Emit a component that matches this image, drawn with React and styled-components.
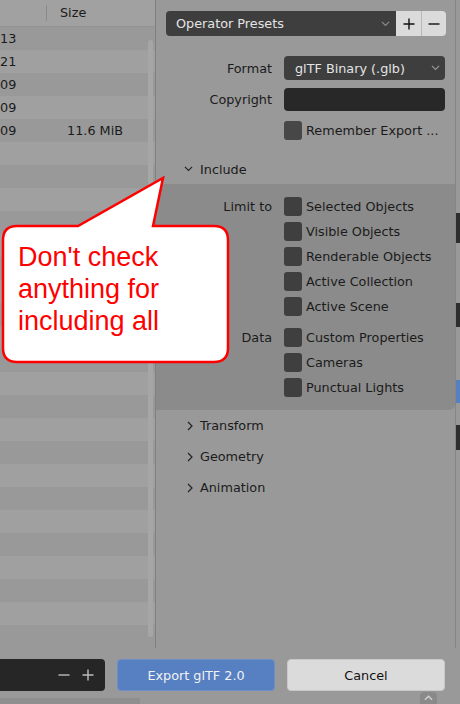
import styled, { createGlobalStyle } from "styled-components";

const GlobalStyle = createGlobalStyle`
  html, body {
    margin: 0;
    padding: 0;
    background: #999999;
  }
  body {
    font-family: "DejaVu Sans", "Liberation Sans", sans-serif;
  }
`;

const Window = styled.div`
  position: relative;
  width: 460px;
  height: 704px;
  overflow: hidden;
  background: #999999;
  display: flex;
  flex-direction: column;
  font-size: 12.8px;
  color: #1b1b1b;
`;

const Main = styled.div`
  display: flex;
  height: 648px;
`;

/* ---------- file list ---------- */
const FileList = styled.div`
  position: relative;
  width: 155px;
  display: flex;
  flex-direction: column;
  border-right: 1px solid #808080;
  background: #9a9a9a;
`;

const ListHeader = styled.div`
  display: flex;
  align-items: center;
  height: 26px;
  background: #a1a1a1;
  border-bottom: 1px solid #929292;
`;

const HeaderCell = styled.div`
  width: ${({ $w }) => $w}px;
  height: 16px;
  padding-left: ${({ $pad }) => $pad || 0}px;
  line-height: 16px;
  border-right: ${({ $sep }) => ($sep ? "1px solid #8a8a8a" : "none")};
  box-sizing: border-box;
`;

const Row = styled.div`
  display: flex;
  align-items: center;
  height: 23px;
  background: ${({ $alt }) => ($alt ? "#a0a0a0" : "#999999")};
`;

const DateCell = styled.div`
  width: 46px;
  overflow: hidden;
`;

const SizeCell = styled.div`
  width: 77px;
  text-align: right;
`;

const Scrollbar = styled.div`
  position: absolute;
  left: 148px;
  top: 40px;
  width: 5px;
  height: 597px;
  border-radius: 3px;
  background: #a6a6a6;
`;

/* ---------- right panel ---------- */
const Panel = styled.div`
  width: 299px;
  display: flex;
  flex-direction: column;
`;

const PresetRow = styled.div`
  display: flex;
  margin: 11px 0 0 10px;
  width: 280px;
  height: 25px;
`;

const PresetSelect = styled.div`
  flex: 1;
  display: flex;
  align-items: center;
  justify-content: space-between;
  padding: 0 6px 0 10px;
  background: #3e3e3e;
  color: #e4e4e4;
  border-radius: 4px 0 0 4px;
`;

const PresetButton = styled.div`
  width: 25px;
  display: flex;
  align-items: center;
  justify-content: center;
  background: #dbdbdb;
  border-left: ${({ $sep }) => ($sep ? "1px solid #b8b8b8" : "none")};
  border-radius: ${({ $last }) => ($last ? "0 4px 4px 0" : "0")};
  box-sizing: border-box;
`;

const PropRow = styled.div`
  display: grid;
  grid-template-columns: 116px 161px;
  column-gap: 12px;
  align-items: center;
  margin-top: ${({ $mt }) => $mt}px;
  height: ${({ $h }) => $h}px;
`;

const PropLabel = styled.div`
  text-align: right;
`;

const Select = styled.div`
  height: 100%;
  display: flex;
  align-items: center;
  justify-content: space-between;
  padding: 0 5px 0 11px;
  background: #3e3e3e;
  color: #e4e4e4;
  border-radius: 4px;
`;

const TextField = styled.div`
  height: 100%;
  background: #282828;
  border-radius: 4px;
`;

const CheckLine = styled.div`
  display: flex;
  align-items: center;
  gap: 4px;
  height: 19px;
  white-space: nowrap;
`;

const Box = styled.div`
  flex: none;
  width: 18px;
  height: 19px;
  border-radius: 3px;
  background: ${({ $light }) => ($light ? "#474747" : "#3f3f3f")};
`;

const SectionHeader = styled.div`
  display: flex;
  align-items: center;
  gap: ${({ $gap }) => $gap}px;
  height: ${({ $h }) => $h || 31}px;
  margin-top: ${({ $mt }) => $mt || 0}px;
  padding-left: ${({ $pad }) => $pad}px;
`;

const IncludeBody = styled.div`
  margin-top: 2px;
  background: #8b8b8b;
  border-radius: 0 0 6px 0;
  padding: 13px 0;
  display: flex;
  flex-direction: column;
  gap: 12px;
`;

const Group = styled.div`
  display: grid;
  grid-template-columns: 116px 1fr;
  column-gap: 12px;
`;

const GroupLabel = styled.div`
  text-align: right;
  line-height: 19px;
`;

const GroupItems = styled.div`
  display: flex;
  flex-direction: column;
  gap: 6px;
`;

const Edge = styled.div`
  flex: 1;
  border-left: 1px solid #858585;
  display: flex;
  flex-direction: column;
`;

const EdgeBlock = styled.div`
  height: ${({ $h }) => $h}px;
  margin-top: ${({ $mt }) => $mt}px;
  background: ${({ $c }) => $c};
`;

/* ---------- footer ---------- */
const Footer = styled.div`
  display: flex;
  gap: 12px;
  margin-top: 11px;
  height: 32px;
`;

const FileField = styled.div`
  width: 105px;
  display: flex;
  align-items: center;
  justify-content: flex-end;
  gap: 12px;
  padding-right: 11px;
  box-sizing: border-box;
  background: #262626;
  border-radius: 0 4px 4px 0;
`;

const ActionButton = styled.div`
  width: 158px;
  display: flex;
  align-items: center;
  justify-content: center;
  border-radius: 4px;
  box-sizing: border-box;
  background: ${({ $primary }) => ($primary ? "#5680c2" : "#dbdbdb")};
  color: ${({ $primary }) => ($primary ? "#f2f2f2" : "#111")};
  border: 1px solid ${({ $primary }) => ($primary ? "#6d8fc8" : "#c9c9c9")};
`;

const BottomStrip = styled.div`
  flex: 1;
  display: flex;
  align-items: flex-end;
`;

const StripShade = styled.div`
  width: 140px;
  height: 6px;
  background: #8f8f8f;
`;

const Tab = styled.div`
  margin-left: 280px;
  width: 17px;
  height: 12px;
  display: flex;
  align-items: center;
  justify-content: center;
  border-radius: 4px 4px 0 0;
  background: #8a8a8a;
`;

/* ---------- callout ---------- */
const Callout = styled.div`
  position: absolute;
  left: 0;
  top: 176px;
  width: 232px;
  height: 190px;
`;

const CalloutShape = styled.svg`
  position: absolute;
  inset: 0;
`;

const CalloutText = styled.div`
  position: absolute;
  left: 18px;
  top: 65px;
  font-family: "Liberation Sans", Arial, sans-serif;
  font-size: 27px;
  line-height: 32px;
  color: #ff0000;
  white-space: nowrap;
`;

const ChevronDown = ({ color = "#222", size = 9 }) => (
  <svg width={size} height={size * 0.6} viewBox="0 0 10 6">
    <path d="M1 1 L5 5 L9 1" fill="none" stroke={color} strokeWidth="1.2" />
  </svg>
);

const ChevronUp = ({ color = "#d0d0d0" }) => (
  <svg width="9" height="6" viewBox="0 0 10 6">
    <path d="M1 5 L5 1 L9 5" fill="none" stroke={color} strokeWidth="1.6" />
  </svg>
);

const ChevronRight = () => (
  <svg width="6" height="10" viewBox="0 0 6 10">
    <path d="M1 1 L5 5 L1 9" fill="none" stroke="#222" strokeWidth="1.2" />
  </svg>
);

const Plus = ({ color = "#111" }) => (
  <svg width="12" height="12" viewBox="0 0 12 12">
    <path d="M6 0.5 V11.5 M0.5 6 H11.5" stroke={color} strokeWidth="1.4" />
  </svg>
);

const Minus = ({ color = "#111" }) => (
  <svg width="12" height="12" viewBox="0 0 12 12">
    <path d="M0.5 6 H11.5" stroke={color} strokeWidth="1.4" />
  </svg>
);

const rows = [
  { date: "13" },
  { date: "21" },
  { date: "09" },
  { date: "09" },
  { date: "09", size: "11.6 MiB" },
  ...Array.from({ length: 22 }, () => ({ date: "" })),
];

const limitTo = [
  "Selected Objects",
  "Visible Objects",
  "Renderable Objects",
  "Active Collection",
  "Active Scene",
];

const dataItems = ["Custom Properties", "Cameras", "Punctual Lights"];

export default function App() {
  return (
    <Window>
      <GlobalStyle />
      <Main>
        <FileList>
          <ListHeader>
            <HeaderCell $w={47} $sep />
            <HeaderCell $w={100} $pad={13}>
              Size
            </HeaderCell>
          </ListHeader>
          {rows.map((r, i) => (
            <Row key={i} $alt={i % 2 === 1}>
              <DateCell>{r.date}</DateCell>
              <SizeCell>{r.size}</SizeCell>
            </Row>
          ))}
          <Scrollbar />
        </FileList>

        <Panel>
          <PresetRow>
            <PresetSelect>
              Operator Presets
              <ChevronDown color="#8e8e8e" />
            </PresetSelect>
            <PresetButton>
              <Plus />
            </PresetButton>
            <PresetButton $sep $last>
              <Minus />
            </PresetButton>
          </PresetRow>

          <PropRow $mt={20} $h={24}>
            <PropLabel>Format</PropLabel>
            <Select>
              glTF Binary (.glb)
              <ChevronDown color="#9a9a9a" />
            </Select>
          </PropRow>
          <PropRow $mt={8} $h={23}>
            <PropLabel>Copyright</PropLabel>
            <TextField />
          </PropRow>
          <PropRow $mt={10} $h={19}>
            <span />
            <CheckLine>
              <Box $light />
              Remember Export ...
            </CheckLine>
          </PropRow>

          <SectionHeader $pad={28} $h={26} $mt={16} $gap={7}>
            <ChevronDown />
            Include
          </SectionHeader>
          <IncludeBody>
            <Group>
              <GroupLabel>Limit to</GroupLabel>
              <GroupItems>
                {limitTo.map((t) => (
                  <CheckLine key={t}>
                    <Box />
                    {t}
                  </CheckLine>
                ))}
              </GroupItems>
            </Group>
            <Group>
              <GroupLabel>Data</GroupLabel>
              <GroupItems>
                {dataItems.map((t) => (
                  <CheckLine key={t}>
                    <Box />
                    {t}
                  </CheckLine>
                ))}
              </GroupItems>
            </Group>
          </IncludeBody>

          {["Transform", "Geometry", "Animation"].map((t) => (
            <SectionHeader key={t} $pad={31} $gap={7}>
              <ChevronRight />
              {t}
            </SectionHeader>
          ))}
        </Panel>

        <Edge>
          <EdgeBlock $mt={213} $h={30} $c="#2e2e2e" />
          <EdgeBlock $mt={60} $h={24} $c="#2e2e2e" />
          <EdgeBlock $mt={53} $h={23} $c="#5680c2" />
          <EdgeBlock $mt={22} $h={25} $c="#2e2e2e" />
        </Edge>
      </Main>

      <Footer>
        <FileField>
          <Minus color="#bdbdbd" />
          <Plus color="#bdbdbd" />
        </FileField>
        <ActionButton $primary>Export glTF 2.0</ActionButton>
        <ActionButton>Cancel</ActionButton>
      </Footer>
      <BottomStrip>
        <StripShade />
        <Tab>
          <ChevronUp />
        </Tab>
      </BottomStrip>

      <Callout>
        <CalloutShape width="232" height="190" viewBox="0 0 232 190">
          <path
            d="M17 50 H78 L163 2 L153 50 H214 Q228 50 228 64 V172 Q228 186 214 186 H17 Q3 186 3 172 V64 Q3 50 17 50 Z"
            fill="#ffffff"
            stroke="#ff0000"
            strokeWidth="2.5"
            strokeLinejoin="miter"
          />
        </CalloutShape>
        <CalloutText>
          Don't check
          <br />
          anything for
          <br />
          including all
        </CalloutText>
      </Callout>
    </Window>
  );
}
